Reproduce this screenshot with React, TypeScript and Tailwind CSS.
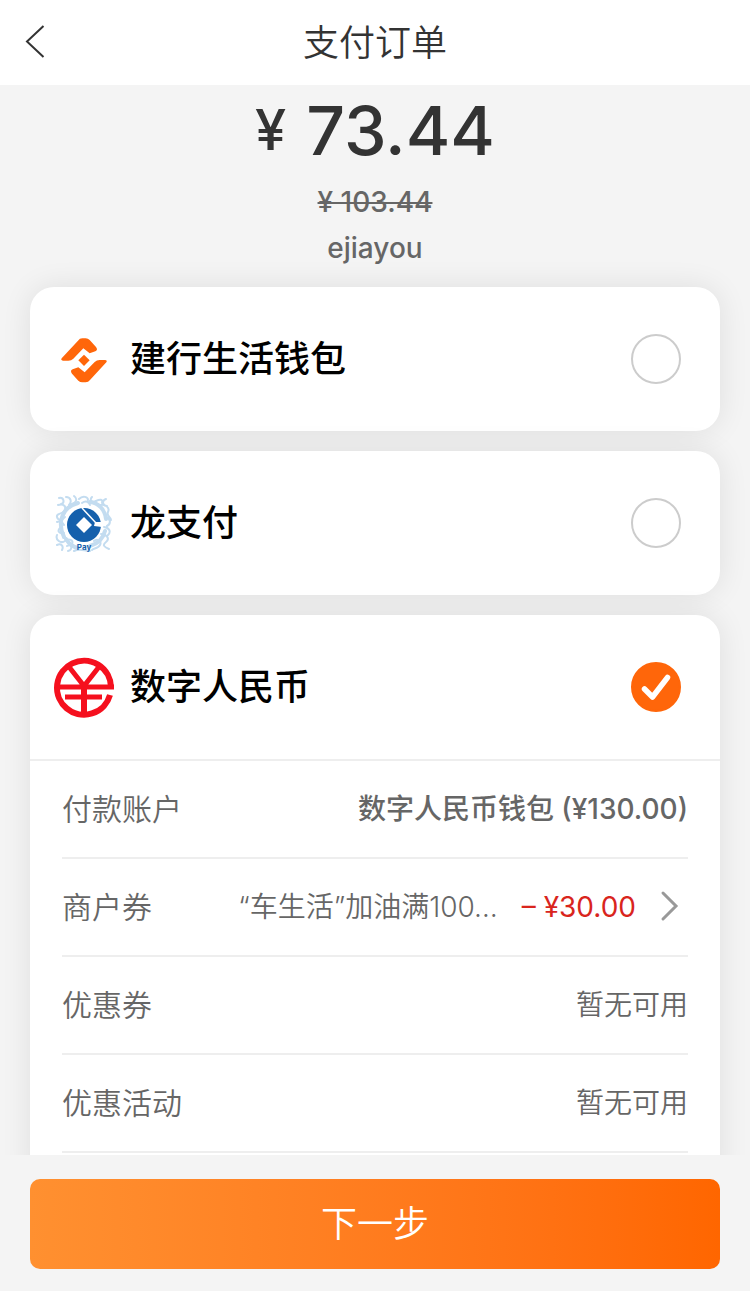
import React, { useState } from 'react'

const methods = [
    { id: 'wallet', name: '建行生活钱包' },
    { id: 'dragon', name: '龙支付' },
    { id: 'ecny', name: '数字人民币' },
]

export default function App() {
    const [selected, setSelected] = useState('ecny')

    return (
        <div className="flex h-screen flex-col bg-[#f4f4f4] font-['Inter','Noto_Sans_CJK_SC',sans-serif] text-[#666]">
            <header className="grid h-[85px] shrink-0 grid-cols-[80px_1fr_80px] items-center bg-white text-[#333]">
                <button type="button" aria-label="返回" className="flex h-full items-center pl-6">
                    <svg viewBox="0 0 22 36" className="h-9 w-[22px]" fill="none" stroke="currentColor" strokeWidth="2">
                        <path d="M19.500 1 3 16.500 19.500 32" />
                    </svg>
                </button>
                <h1 className="text-center text-4xl font-[350]">支付订单</h1>
            </header>

            <main className="min-h-0 flex-1 overflow-y-auto [scrollbar-width:none]">
                <section className="flex h-[202px] flex-col items-center font-medium">
                    <p className="mb-1 flex items-center gap-5 text-[#333]">
                        <span className="text-[56px] leading-[90px]">¥</span>
                        <span className="text-[68px] leading-[90px]">73.44</span>
                    </p>
                    <del className="text-[28px] leading-[46px]">¥ 103.44</del>
                    <p className="text-[28px] leading-[46px]">ejiayou</p>
                </section>

                <div className="flex flex-col gap-5 px-[30px] pb-5">
                    {methods.map((method) => (
                        <section key={method.id} className="rounded-3xl bg-white shadow-[0_0_30px_rgba(0,0,0,0.09)]">
                            <label className="flex h-36 items-center pr-[39px] pl-6">
                                <MethodLogo id={method.id} />
                                <span className="ml-4 flex-1 text-4xl font-medium text-black">{method.name}</span>
                                <span className="relative h-[50px] w-[50px]">
                                    <input
                                        type="radio"
                                        name="method"
                                        checked={selected === method.id}
                                        onChange={() => setSelected(method.id)}
                                        className="block h-full w-full appearance-none rounded-full border-2 border-[#ccc] checked:border-[#ff660a] checked:bg-[#ff660a]"
                                    />
                                    {selected === method.id && (
                                        <svg viewBox="0 0 50 50" className="pointer-events-none absolute inset-0" fill="none" stroke="#fff" strokeWidth="5.500" strokeLinecap="round" strokeLinejoin="round">
                                            <path d="m13.500 27 8 8L36.500 15.500" />
                                        </svg>
                                    )}
                                </span>
                            </label>
                            {selected === method.id && <PaymentDetails />}
                        </section>
                    ))}
                </div>
            </main>

            <footer className="shrink-0 px-[30px] pt-6 pb-[22px]">
                <button type="button" className="h-[90px] w-full rounded-[10px] bg-linear-to-r from-[#ff9030] to-[#ff6600] text-4xl font-[350] text-white">
                    下一步
                </button>
            </footer>
        </div>
    )
}

const PaymentDetails = () => {
    return (
        <div className="border-t-2 border-[#eee] px-8 pb-10">
            <DetailRow label="付款账户">
                <span className="font-medium">数字人民币钱包 (¥130.00)</span>
            </DetailRow>
            <DetailRow label="商户券">
                <button type="button" className="flex items-center">
                    <span className="font-[350]">“车生活”加油满100…</span>
                    <span className="ml-6 text-[#d9251d]">– ¥30.00</span>
                    <svg viewBox="0 0 20 34" className="mr-2 ml-6 h-[34px] w-5" fill="none" stroke="#999" strokeWidth="3" strokeLinecap="round">
                        <path d="m3 3 13 13L3 29" />
                    </svg>
                </button>
            </DetailRow>
            <DetailRow label="优惠券">
                <span className="font-[350]">暂无可用</span>
            </DetailRow>
            <DetailRow label="优惠活动">
                <span className="font-[350]">暂无可用</span>
            </DetailRow>
        </div>
    )
}

const DetailRow = (props: { label: string, children: React.ReactNode }) => {
    return (
        <div className="flex h-[98px] items-center justify-between border-b-2 border-[#eee] text-[28px]">
            <span className="text-[30px] font-[350]">{props.label}</span>
            {props.children}
        </div>
    )
}

const MethodLogo = (props: { id: string }) => {
    if (props.id === 'wallet') {
        return (
            <svg viewBox="41 29 180 180" className="h-[60px] w-[60px]" fill="#ff660a">
                <path d="M64 117 113 64Q118 57 126 57H136Q143 57 148 62L167 83Q174 92 165 96L148 102 129 87 99 118Q93 124 84 124H68Q60 123 64 117Z" />
                <path transform="rotate(180 131 123)" d="M64 117 113 64Q118 57 126 57H136Q143 57 148 62L167 83Q174 92 165 96L148 102 129 87 99 118Q93 124 84 124H68Q60 123 64 117Z" />
                <path d="m131 106 17 17-17 17-17-17z" />
            </svg>
        )
    }

    if (props.id === 'dragon') {
        return (
            <svg viewBox="0 0 60 60" className="h-[60px] w-[60px]">
                {/* pale dragon curled behind the coin */}
                <g fill="none" stroke="#c3dcf0" strokeLinecap="round">
                    <path strokeWidth="4" d="M10 44C3 30 8 14 24 10M36 9c9 1 15 8 16 17M51 38c-2 8-8 13-15 15M12 46c3 5 7 8 12 9" />
                    <path strokeWidth="2" d="M5 5c5-1 6 5 2 6M4 12c6-2 9 2 6 6s-8 2-7 6 6 3 8 0M12 4c5 0 6 5 3 8M20 3c4 3 2 7-2 8M25 6c4-4 9-2 9 1M28 10c4-3 7-1 8 2M38 4c-3 3 0 6 4 4s7-2 6 2M52 6c-5 2-3 7 1 7M46 12c6-1 10 3 8 7s3 5 3 8M52 24c5 2 5 7 1 9M50 34c6 1 7 5 4 8M47 41c6 0 9 5 5 8s-2 5 3 7M40 48c3-3 8 0 6 4s-7 3-8 5M3 29c5-2 6 3 3 6s-1 6 4 5M3 42c-2 5 4 9 8 6s9-1 7 3M3 52c4-2 7 1 5 5M13 53c5-3 6 4 1 5M20 58c6-3 10 0 16 0M11 20c-5 4-4 9-1 12" />
                </g>
                <circle cx="30" cy="32" r="17" fill="#1560ac" />
                <path d="m30 24 8 8-8 8-8-8z" fill="#fff" />
                <path d="m28 15 14 15" stroke="#fff" strokeWidth="1.500" />
                <path d="M41 29h7v5l-8-1z" fill="#fff" />
                <text x="30" y="57" textAnchor="middle" fontSize="8" fontWeight="700" fill="#1560ac">Pay</text>
            </svg>
        )
    }

    return (
        <svg viewBox="0 -1 60 60" className="h-[60px] w-[60px] overflow-visible" fill="none" stroke="#f5101e" strokeWidth="6">
            <path d="M57 29A27 27 0 1 0 56 37" />
            <path strokeWidth="5" d="M4 29h56M11 39h37M15.500 9.500 30 28l14.500-18.500" />
            <path d="M30 28v30" />
        </svg>
    )
}
